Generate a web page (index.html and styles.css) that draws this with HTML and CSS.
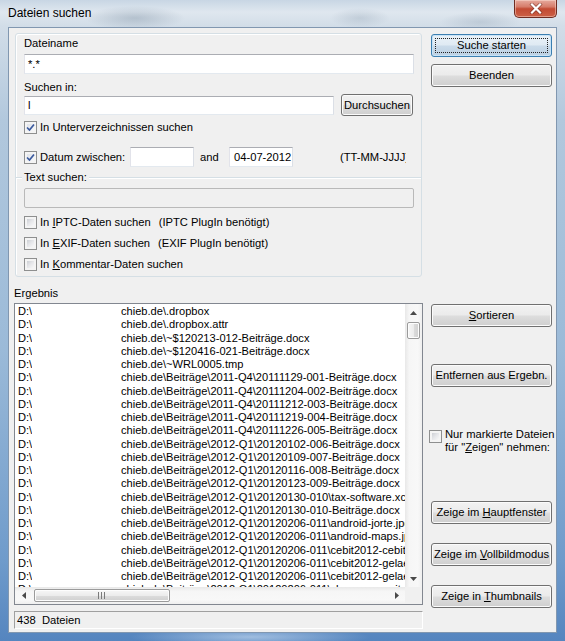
FILE: index.html
```html
<!DOCTYPE html>
<html lang="de">
<head>
<meta charset="utf-8">
<title>Dateien suchen</title>
<link rel="stylesheet" href="styles.css">
</head>
<body>
<div class="window">
  <div class="titlebar">
    <div class="title">Dateien suchen</div>
    <div class="close">
      <svg width="14" height="11" viewBox="0 0 14 11"><path d="M3 1.5 L11 9.5 M11 1.5 L3 9.5" stroke="#5a1d14" stroke-width="3.6" stroke-linecap="square" opacity=".55"/><path d="M3 1.5 L11 9.5 M11 1.5 L3 9.5" stroke="#fff" stroke-width="2.2" stroke-linecap="square"/></svg>
    </div>
  </div>
  <div class="client">
    <div class="leftcol">
      <div class="group">
        <div class="lbl">Dateiname</div>
        <div class="input wide">*.*</div>
        <div class="lbl lbl-gap">Suchen in:</div>
        <div class="pathrow">
          <div class="input path">l</div>
          <div class="btn browse"><span>Durchsuchen</span></div>
        </div>
        <div class="cbrow first"><span class="cb checked"><svg width="9" height="9" viewBox="0 0 9 9"><path d="M1 4.5 L3.5 7 L8 1.5" fill="none" stroke="#3b5a9e" stroke-width="1.7"/></svg></span><span>In Unterverzeichnissen suchen</span></div>
        <div class="daterow">
          <span class="cb checked"><svg width="9" height="9" viewBox="0 0 9 9"><path d="M1 4.5 L3.5 7 L8 1.5" fill="none" stroke="#3b5a9e" stroke-width="1.7"/></svg></span>
          <span class="datelbl">Datum zwischen:</span>
          <div class="input date"></div>
          <span class="and">and</span>
          <div class="input date">04-07-2012</div>
          <span class="fmt">(TT-MM-JJJJ)</span>
        </div>
        <div class="sep"><span class="sepline short"></span><span class="seplbl">Text suchen:</span><span class="sepline"></span></div>
        <div class="input wide disabled"></div>
        <div class="cbrow opt"><span class="cb"></span><span>In <u>I</u>PTC-Daten suchen</span><span class="note">(IPTC PlugIn benötigt)</span></div>
        <div class="cbrow opt"><span class="cb"></span><span>In <u>E</u>XIF-Daten suchen</span><span class="note">(EXIF PlugIn benötigt)</span></div>
        <div class="cbrow opt"><span class="cb"></span><span>In <u>K</u>ommentar-Daten suchen</span></div>
      </div>
      <div class="lbl ergebnis">Ergebnis</div>
      <div class="list">
        <div class="rows">
          <div class="row"><span class="drive">D:\</span><span class="p">chieb.de\.dropbox</span></div>
          <div class="row"><span class="drive">D:\</span><span class="p">chieb.de\.dropbox.attr</span></div>
          <div class="row"><span class="drive">D:\</span><span class="p">chieb.de\~$120213-012-Beiträge.docx</span></div>
          <div class="row"><span class="drive">D:\</span><span class="p">chieb.de\~$120416-021-Beiträge.docx</span></div>
          <div class="row"><span class="drive">D:\</span><span class="p">chieb.de\~WRL0005.tmp</span></div>
          <div class="row"><span class="drive">D:\</span><span class="p">chieb.de\Beiträge\2011-Q4\20111129-001-Beiträge.docx</span></div>
          <div class="row"><span class="drive">D:\</span><span class="p">chieb.de\Beiträge\2011-Q4\20111204-002-Beiträge.docx</span></div>
          <div class="row"><span class="drive">D:\</span><span class="p">chieb.de\Beiträge\2011-Q4\20111212-003-Beiträge.docx</span></div>
          <div class="row"><span class="drive">D:\</span><span class="p">chieb.de\Beiträge\2011-Q4\20111219-004-Beiträge.docx</span></div>
          <div class="row"><span class="drive">D:\</span><span class="p">chieb.de\Beiträge\2011-Q4\20111226-005-Beiträge.docx</span></div>
          <div class="row"><span class="drive">D:\</span><span class="p">chieb.de\Beiträge\2012-Q1\20120102-006-Beiträge.docx</span></div>
          <div class="row"><span class="drive">D:\</span><span class="p">chieb.de\Beiträge\2012-Q1\20120109-007-Beiträge.docx</span></div>
          <div class="row"><span class="drive">D:\</span><span class="p">chieb.de\Beiträge\2012-Q1\20120116-008-Beiträge.docx</span></div>
          <div class="row"><span class="drive">D:\</span><span class="p">chieb.de\Beiträge\2012-Q1\20120123-009-Beiträge.docx</span></div>
          <div class="row"><span class="drive">D:\</span><span class="p">chieb.de\Beiträge\2012-Q1\20120130-010\tax-software.xcf</span></div>
          <div class="row"><span class="drive">D:\</span><span class="p">chieb.de\Beiträge\2012-Q1\20120130-010-Beiträge.docx</span></div>
          <div class="row"><span class="drive">D:\</span><span class="p">chieb.de\Beiträge\2012-Q1\20120206-011\android-jorte.jpg</span></div>
          <div class="row"><span class="drive">D:\</span><span class="p">chieb.de\Beiträge\2012-Q1\20120206-011\android-maps.jpg</span></div>
          <div class="row"><span class="drive">D:\</span><span class="p">chieb.de\Beiträge\2012-Q1\20120206-011\cebit2012-cebit.jpg</span></div>
          <div class="row"><span class="drive">D:\</span><span class="p">chieb.de\Beiträge\2012-Q1\20120206-011\cebit2012-gelaende.jpg</span></div>
          <div class="row"><span class="drive">D:\</span><span class="p">chieb.de\Beiträge\2012-Q1\20120206-011\cebit2012-gelaende2.jpg</span></div>
          <div class="row"><span class="drive">D:\</span><span class="p">chieb.de\Beiträge\2012-Q1\20120206-011\chrome-erweiterung.jpg</span></div>
        </div>
        <div class="vscroll">
          <div class="arrow"><svg width="7" height="4" viewBox="0 0 7 4"><polygon points="0,4 3.5,0 7,4" fill="#4a4a4a"/></svg></div>
          <div class="vthumb"></div>
          <div class="vtrack"></div>
          <div class="arrow"><svg width="7" height="4" viewBox="0 0 7 4"><polygon points="0,0 3.5,4 7,0" fill="#4a4a4a"/></svg></div>
        </div>
        <div class="hscroll">
          <div class="harrow"><svg width="4" height="7" viewBox="0 0 4 7"><polygon points="4,0 0,3.5 4,7" fill="#4a4a4a"/></svg></div>
          <div class="hthumb"><svg width="8" height="7" viewBox="0 0 8 7"><path d="M0.5 0 V7 M3.5 0 V7 M6.5 0 V7" stroke="#7a7a7a" stroke-width="1"/></svg></div>
          <div class="htrack"></div>
          <div class="harrow"><svg width="4" height="7" viewBox="0 0 4 7"><polygon points="0,0 4,3.5 0,7" fill="#4a4a4a"/></svg></div>
        </div>
        <div class="corner"></div>
      </div>
      <div class="status">438&nbsp; Dateien</div>
    </div>
    <div class="rightcol">
      <div class="btn default b-start"><span class="focus">Suche starten</span></div>
      <div class="btn b-end"><span>Beenden</span></div>
      <div class="btn b-sort"><span><u>S</u>ortieren</span></div>
      <div class="btn b-remove"><span>Entfernen aus Ergebn.</span></div>
      <div class="markrow"><span class="cb"></span><span class="marktext">Nur markierte Dateien<br>für "<u>Z</u>eigen" nehmen:</span></div>
      <div class="btn b-main"><span>Zeige im <u>H</u>auptfenster</span></div>
      <div class="btn b-full"><span>Zeige im <u>V</u>ollbildmodus</span></div>
      <div class="btn b-thumb"><span>Zeige in <u>T</u>humbnails</span></div>
    </div>
  </div>
</div>
</body>
</html>
```
FILE: styles.css
```css
* { box-sizing: border-box; }
html, body { margin: 0; padding: 0; }
body {
  width: 565px; height: 641px; overflow: hidden;
  font-family: "Liberation Sans", Arial, sans-serif;
  font-size: 11.2px; color: #000;
}
.window {
  width: 565px; height: 641px;
  display: flex; flex-direction: column;
  background:
    radial-gradient(ellipse 50px 12px at 135px 18px, rgba(110,130,150,.35), transparent),
    radial-gradient(ellipse 30px 10px at 360px 18px, rgba(120,140,160,.25), transparent),
    radial-gradient(ellipse 40px 10px at 480px 22px, rgba(120,140,160,.25), transparent),
    radial-gradient(ellipse 120px 10px at 250px 637px, rgba(220,235,250,.55), transparent),
    linear-gradient(180deg, #c8d6e4 0px, #dfe7ef 12px, #d2dde8 26px, #b2c8dd 120px, #9bbad8 350px, #6f9bcb 560px, #5585bf 641px);
}
.titlebar {
  height: 27px; flex: none;
  display: flex; justify-content: space-between; align-items: flex-start;
}
.title { padding: 6px 0 0 8px; font-size: 12px; line-height: 14px; color: #000; }
.close {
  width: 43px; height: 18px; margin-right: 8px;
  border: 1px solid #6e2c22; border-top: none;
  border-radius: 0 0 5px 5px;
  background: linear-gradient(180deg, #e6aa9e 0%, #d67c6a 40%, #c24a33 52%, #cc6147 100%);
  box-shadow: inset 0 0 0 1px rgba(255,230,220,.45);
  display: flex; align-items: center; justify-content: center;
}
.client {
  height: 606px; margin: 0 8px; flex: none;
  background: #f0f0f0;
  border: 1px solid #8197b0;
  display: flex; gap: 8px;
  padding: 5px 4px 0 5px;
}
.leftcol { width: 409px; flex: none; display: flex; flex-direction: column; }
.rightcol { width: 121px; flex: none; display: flex; flex-direction: column; }

.group {
  width: 407px; height: 244px; margin-left: 1px;
  border: 1px solid #d5dfe5; border-radius: 3px;
  box-shadow: inset 1px 1px 0 #fff;
  padding: 3px 7px 0 8px;
  display: flex; flex-direction: column;
}
.lbl { line-height: 13px; height: 13px; white-space: nowrap; }
.lbl-gap { margin-top: 7px; }
.input {
  height: 20px; background: #fff;
  border: 1px solid; border-color: #abadb3 #dbdfe6 #e3e9ef #e2e3ea;
  padding: 0 3px; display: flex; align-items: center; white-space: nowrap;
}
.wide { width: 390px; margin-top: 4px; }
.disabled { background: #f0f0f0; border: 1px solid #b9b9b9; border-radius: 2px; }
.pathrow { display: flex; align-items: center; gap: 7px; height: 22px; }
.input.path { width: 310px; height: 19px; }
.btn {
  height: 23px; flex: none;
  border: 1px solid #707070; border-radius: 3px;
  background: linear-gradient(180deg, #f2f2f2 0%, #ebebeb 47%, #dddddd 53%, #cfcfcf 100%);
  box-shadow: inset 0 0 0 1px #fbfbfb;
  display: flex; align-items: center; justify-content: center;
  white-space: nowrap; line-height: 13px;
}
.btn.browse { width: 72px; height: 22px; }
.btn.default {
  border-color: #3c7fb1;
  background: linear-gradient(180deg, #eaf2f8 0%, #dfeaf3 47%, #cadbea 53%, #bcd0e2 100%);
  box-shadow: inset 0 0 0 1px #c8e3f6;
  padding: 3px;
}
.focus {
  flex: 1; align-self: stretch;
  border: 1px dotted #222;
  display: flex; align-items: center; justify-content: center;
}

.cb {
  width: 13px; height: 13px; flex: none;
  border: 1px solid #8e8f8f;
  background: #f4f4f4;
  padding: 1px;
  display: flex; align-items: center; justify-content: center;
  position: relative;
}
.cb::before {
  content: ""; position: absolute; inset: 2px;
  background: linear-gradient(135deg, #cdd0d5 0%, #e6e7ea 50%, #f8f8f8 100%);
}
.cb.checked::before { background: linear-gradient(135deg, #dfe3ea, #f6f7f9); }
.cb svg { position: relative; }
.cbrow { display: flex; align-items: center; gap: 3px; height: 14px; white-space: nowrap; }
.cbrow.first { margin-top: 4px; }
.cbrow.opt { margin-top: 7px; }
.note { margin-left: 5px; }

.daterow { display: flex; align-items: center; height: 20px; margin-top: 13px; white-space: nowrap; }
.datelbl { width: 93px; padding-left: 3px; flex: none; }
.input.date { width: 64px; flex: none; padding: 0 4px; }
.and { width: 35px; padding-left: 6px; flex: none; }
.fmt { margin-left: 47px; width: 66px; overflow: hidden; flex: none; }

.sep { display: flex; align-items: center; height: 13px; margin: 4px -7px 0 -8px; }
.sepline { flex: 1; height: 1px; background: #d5dfe5; box-shadow: 0 1px 0 #fff; }
.sepline.short { flex: none; width: 6px; }
.seplbl { padding: 0 2px; white-space: nowrap; line-height: 13px; }

.ergebnis { margin-top: 10px; }
.list {
  margin-top: 3px; height: 302px;
  border: 1px solid #828790; background: #fff;
  display: grid; grid-template-columns: 390px 17px; grid-template-rows: 283px 17px;
  font-size: 11.1px;
}
.rows { overflow: hidden; padding: 1px 0 0 3px; }
.row { height: 13.25px; line-height: 13.25px; white-space: nowrap; display: flex; }
.drive { width: 14px; overflow: hidden; flex: none; }
.p { margin-left: 89px; }

.vscroll {
  display: flex; flex-direction: column;
  background: linear-gradient(90deg, #e8e8e8 0%, #f6f6f6 25%, #f8f8f8 75%, #efefef 100%);
}
.arrow { height: 17px; flex: none; display: flex; align-items: center; justify-content: center; }
.vthumb {
  height: 17px; margin: 1px 2px 0 2px; flex: none;
  border: 1px solid #9b9b9b; border-radius: 2px;
  background: linear-gradient(90deg, #f7f7f7 0%, #ececec 50%, #dcdcdc 52%, #d0d0d0 100%);
  box-shadow: inset 0 0 0 1px #fdfdfd;
}
.vtrack { flex: 1; }
.hscroll {
  display: flex;
  background: linear-gradient(180deg, #e8e8e8 0%, #f6f6f6 25%, #f8f8f8 75%, #efefef 100%);
}
.harrow { width: 17px; flex: none; display: flex; align-items: center; justify-content: center; }
.hthumb {
  width: 136px; margin: 2px 0 2px 2px; flex: none;
  border: 1px solid #9b9b9b; border-radius: 2px;
  background: linear-gradient(180deg, #f7f7f7 0%, #ececec 50%, #dcdcdc 52%, #d0d0d0 100%);
  box-shadow: inset 0 0 0 1px #fdfdfd;
  display: flex; align-items: center; justify-content: center;
}
.htrack { flex: 1; }
.corner { background: #f0f0f0; }

.status {
  margin-top: 6px; height: 18px;
  border: 1px solid; border-color: #a0a0a0 #ffffff #ffffff #a0a0a0;
  padding-left: 2px; line-height: 16px; white-space: nowrap;
}

.b-start { margin-top: 1px; }
.b-end { margin-top: 7px; }
.b-sort { margin-top: 217px; }
.b-remove { margin-top: 37px; }
.markrow { margin-top: 41px; margin-left: -2px; display: flex; align-items: flex-start; height: 26px; }
.markrow .cb { margin-top: 2px; }
.marktext { margin-left: 3px; line-height: 13px; white-space: nowrap; }
.b-main { margin-top: 47px; }
.b-full { margin-top: 19px; }
.b-thumb { margin-top: 19px; }
```
